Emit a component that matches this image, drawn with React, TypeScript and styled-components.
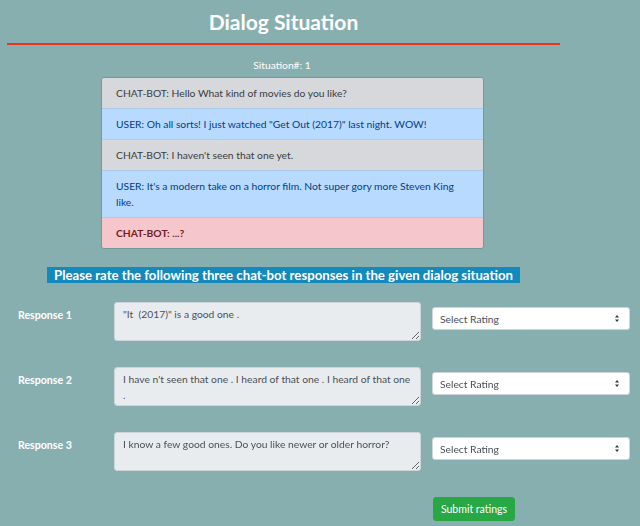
import React from 'react';
import styled, { createGlobalStyle } from 'styled-components';

const GlobalStyle = createGlobalStyle`
  html, body {
    margin: 0;
    padding: 0;
    background: #88afb0;
    font-family: Lato, 'Open Sans', sans-serif;
  }
  * { box-sizing: border-box; }
`;

type Tone = 'secondary' | 'primary' | 'danger';

const turns: { tone: Tone; text: string }[] = [
  { tone: 'secondary', text: 'CHAT-BOT: Hello What kind of movies do you like?' },
  { tone: 'primary', text: 'USER: Oh all sorts! I just watched "Get Out (2017)" last night. WOW!' },
  { tone: 'secondary', text: "CHAT-BOT: I haven't seen that one yet." },
  { tone: 'primary', text: "USER: It's a modern take on a horror film. Not super gory more Steven King like." },
  { tone: 'danger', text: 'CHAT-BOT: ...?' },
];

const responses = [
  '"It  (2017)" is a good one .',
  'I have n\'t seen that one . I heard of that one . I heard of that one .',
  'I know a few good ones. Do you like newer or older horror?',
];

export default function App() {
  return (
    <>
      <GlobalStyle />
      <Page>
        <Header>
          <Title>Dialog Situation</Title>
          <Rule />
        </Header>
        <SituationLabel>Situation#: 1</SituationLabel>
        <DialogList>
          {turns.map((t, i) => (
            <DialogItem key={i} tone={t.tone}>
              {t.text}
            </DialogItem>
          ))}
        </DialogList>
        <BannerRow>
          <Banner>Please rate the following three chat-bot responses in the given dialog situation</Banner>
        </BannerRow>
        <Responses>
          {responses.map((r, i) => (
            <ResponseRow key={i}>
              <ResponseLabel>Response {i + 1}</ResponseLabel>
              <ResponseText readOnly value={r} />
              <RatingSelect defaultValue="">
                <option value="">Select Rating</option>
                <option value="1">1</option>
                <option value="2">2</option>
                <option value="3">3</option>
              </RatingSelect>
            </ResponseRow>
          ))}
        </Responses>
        <SubmitRow>
          <SubmitButton>Submit ratings</SubmitButton>
        </SubmitRow>
      </Page>
    </>
  );
}

const Page = styled.div`
  width: 640px;
  height: 526px;
  overflow: hidden;
  padding-top: 8px;
`;

const Header = styled.div`
  width: 553px;
  margin-left: 7px;
`;

const Title = styled.h1`
  margin: 0;
  text-align: center;
  color: #fff;
  font-size: 21px;
  font-weight: 700;
  line-height: 28px;
`;

const Rule = styled.div`
  height: 2px;
  margin-top: 7px;
  background: #e8341c;
`;

const SituationLabel = styled.div`
  width: 564px;
  margin-top: 13px;
  text-align: center;
  color: #fff;
  font-size: 10.3px;
  line-height: 14px;
`;

const DialogList = styled.div`
  width: 383px;
  margin: 5px 0 0 101px;
  border: 1px solid rgba(0, 0, 0, 0.12);
  border-radius: 3px;
  overflow: hidden;
`;

const toneColors: Record<Tone, { bg: string; fg: string }> = {
  secondary: { bg: '#d6d8db', fg: '#383d41' },
  primary: { bg: '#b8daff', fg: '#004085' },
  danger: { bg: '#f5c6cb', fg: '#721c24' },
};

const DialogItem = styled.div<{ tone: Tone }>`
  padding: 7px 14px;
  font-size: 10.3px;
  line-height: 16px;
  background: ${(p) => toneColors[p.tone].bg};
  color: ${(p) => toneColors[p.tone].fg};
  font-weight: ${(p) => (p.tone === 'danger' ? 700 : 400)};
  & + & {
    border-top: 1px solid rgba(0, 0, 0, 0.08);
  }
`;

const BannerRow = styled.div`
  margin: 15px 0 0 47px;
`;

const Banner = styled.div`
  display: inline-block;
  background: #1489bd;
  color: #fff;
  font-size: 13.2px;
  font-weight: 700;
  line-height: 16px;
  padding: 0 7px;
`;

const Responses = styled.div`
  margin-top: 19px;
  display: flex;
  flex-direction: column;
  gap: 26px;
`;

const ResponseRow = styled.div`
  display: flex;
  align-items: flex-start;
`;

const ResponseLabel = styled.div`
  width: 114px;
  padding: 6px 0 0 18px;
  color: #fff;
  font-size: 10.6px;
  font-weight: 700;
  line-height: 14px;
`;

const ResponseText = styled.textarea`
  width: 307px;
  height: 39px;
  margin: 0;
  padding: 3px 8px;
  background: #e9ecef;
  border: 1px solid #ced4da;
  border-radius: 3px;
  color: #495057;
  font-family: Lato, 'Open Sans', sans-serif;
  font-size: 10.3px;
  line-height: 16px;
  resize: vertical;
  outline: none;
`;

const RatingSelect = styled.select`
  width: 198px;
  height: 23px;
  margin: 5px 0 0 11px;
  padding: 0 7px;
  background: #fff;
  border: 1px solid #ced4da;
  border-radius: 3px;
  color: #495057;
  font-family: Lato, 'Open Sans', sans-serif;
  font-size: 10.3px;
  appearance: none;
  background-image: url("data:image/svg+xml,%3Csvg xmlns='http://www.w3.org/2000/svg' width='4' height='7' viewBox='0 0 4 7'%3E%3Cpath fill='%23343a40' d='M2 0L0 2.5h4zM2 7L0 4.5h4z'/%3E%3C/svg%3E");
  background-repeat: no-repeat;
  background-position: right 10px center;
`;

const SubmitRow = styled.div`
  margin: 26px 0 0 433px;
`;

const SubmitButton = styled.button`
  width: 82px;
  height: 24px;
  background: #28a745;
  border: 1px solid #28a745;
  border-radius: 3px;
  color: #fff;
  font-family: Lato, 'Open Sans', sans-serif;
  font-size: 10.5px;
  padding: 0;
`;
